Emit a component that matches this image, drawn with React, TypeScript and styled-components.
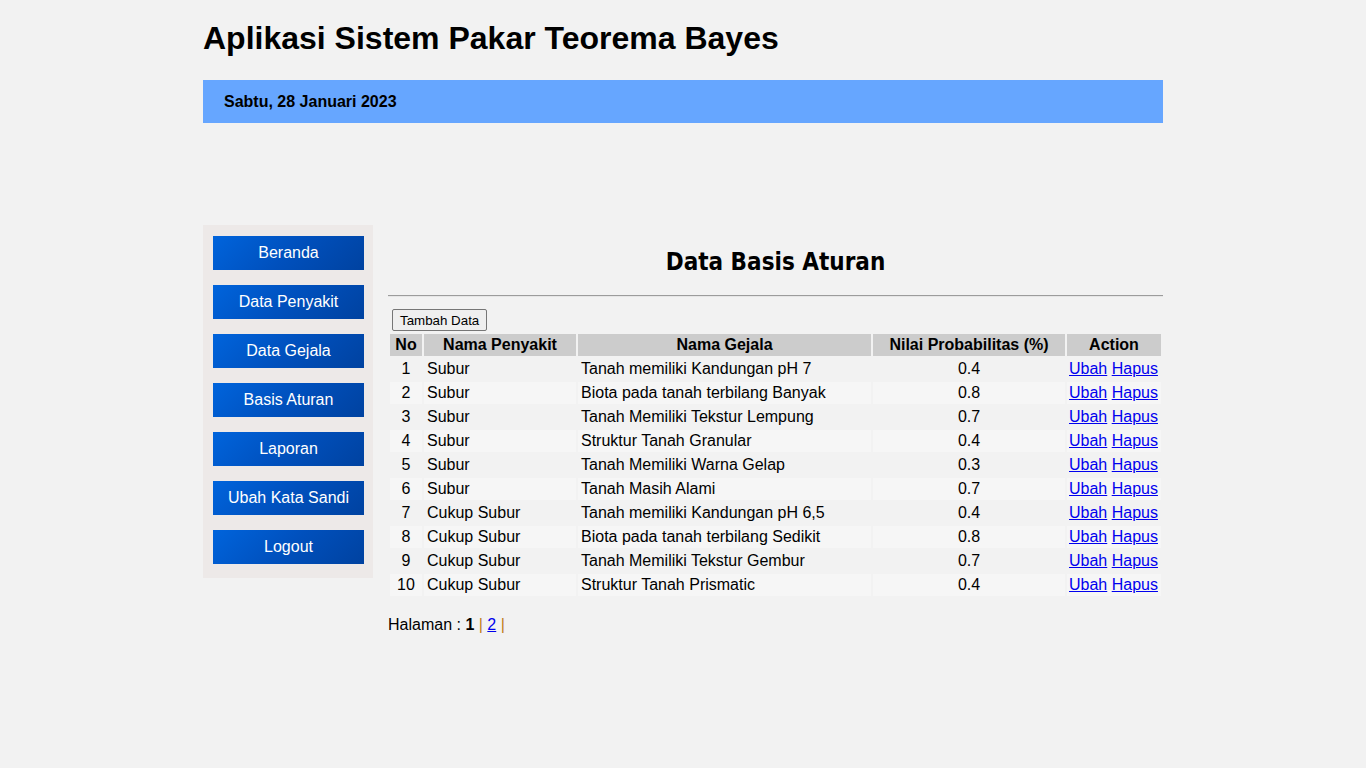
import React from "react";
import styled, { createGlobalStyle } from "styled-components";

const GlobalStyle = createGlobalStyle`
  html, body {
    margin: 0;
    padding: 0;
    background: #f2f2f2;
    font-family: "Liberation Sans", Arial, sans-serif;
    color: #000;
  }
`;

const Page = styled.div`
  width: 960px;
  margin: 0 auto;
`;

const Title = styled.h1`
  margin: 0;
  padding-top: 19px;
  height: 80px;
  box-sizing: border-box;
  font-size: 32px;
  font-weight: bold;
  line-height: 39px;
`;

const DateBar = styled.div`
  height: 43px;
  background: #66a6ff;
  display: flex;
  align-items: center;
  padding-left: 21px;
  font-size: 16px;
  font-weight: bold;
`;

const Body = styled.div`
  display: flex;
  align-items: flex-start;
  gap: 15px;
  margin-top: 102px;
`;

const Sidebar = styled.nav`
  width: 170px;
  box-sizing: border-box;
  background: #ede9e8;
  padding: 11px 9px 14px 10px;
  display: flex;
  flex-direction: column;
  gap: 15px;
`;

const NavButton = styled.a`
  display: flex;
  align-items: center;
  justify-content: center;
  height: 34px;
  background: linear-gradient(135deg, #0064dc 0%, #0050bd 50%, #0042a0 100%);
  color: #fff;
  font-size: 16px;
  text-decoration: none;
  cursor: pointer;
`;

const Content = styled.main`
  flex: 1;
  min-width: 0;
`;

const Heading = styled.h2`
  margin: 0;
  padding-top: 23px;
  height: 70px;
  box-sizing: border-box;
  text-align: center;
  font-family: "DejaVu Sans Condensed", "DejaVu Sans", sans-serif;
  font-size: 24px;
  font-weight: bold;
  line-height: 28px;
`;

const Rule = styled.hr`
  margin: 0 0 12px 0;
  border: none;
  border-top: 1px solid #9c9c9c;
  border-bottom: 1px solid #e6e6e6;
  height: 0;
`;

const AddButton = styled.button`
  margin-left: 4px;
  height: 22px;
  padding: 0 7px;
  font-family: "Liberation Sans", Arial, sans-serif;
  font-size: 13.33px;
  background: #efefef;
  border: 1px solid #767676;
  border-radius: 2px;
  color: #000;
  display: block;
`;

const Table = styled.table`
  width: 100%;
  table-layout: fixed;
  border-collapse: separate;
  border-spacing: 2px;
  font-size: 16px;
  margin-top: 1px;
`;

const Th = styled.th`
  background: #cccccc;
  font-weight: bold;
  height: 22px;
  padding: 0 2px;
  text-align: center;
  white-space: nowrap;
`;

const Row = styled.tr<{ $even: boolean }>`
  background: ${(p) => (p.$even ? "#f6f6f6" : "#f2f2f2")};
`;

const Td = styled.td<{ $center?: boolean }>`
  height: 22px;
  padding: 0 2px 0 ${(p) => (p.$center ? "2px" : "3px")};
  text-align: ${(p) => (p.$center ? "center" : "left")};
  white-space: nowrap;
  line-height: 18px;
`;

const ActionCell = styled.td`
  height: 22px;
  padding: 0 1px 0 2px;
  white-space: nowrap;
  line-height: 18px;
  text-align: left;
`;

const Link = styled.a`
  color: #0000ee;
  text-decoration: underline;
  cursor: pointer;
`;

const Pager = styled.div`
  margin-top: 18px;
  font-size: 16px;
`;

const Pipe = styled.span`
  color: #c0801a;
`;

const navItems = [
  "Beranda",
  "Data Penyakit",
  "Data Gejala",
  "Basis Aturan",
  "Laporan",
  "Ubah Kata Sandi",
  "Logout",
];

const rows: [string, string, string][] = [
  ["Subur", "Tanah memiliki Kandungan pH 7", "0.4"],
  ["Subur", "Biota pada tanah terbilang Banyak", "0.8"],
  ["Subur", "Tanah Memiliki Tekstur Lempung", "0.7"],
  ["Subur", "Struktur Tanah Granular", "0.4"],
  ["Subur", "Tanah Memiliki Warna Gelap", "0.3"],
  ["Subur", "Tanah Masih Alami", "0.7"],
  ["Cukup Subur", "Tanah memiliki Kandungan pH 6,5", "0.4"],
  ["Cukup Subur", "Biota pada tanah terbilang Sedikit", "0.8"],
  ["Cukup Subur", "Tanah Memiliki Tekstur Gembur", "0.7"],
  ["Cukup Subur", "Struktur Tanah Prismatic", "0.4"],
];

export default function App() {
  return (
    <>
      <GlobalStyle />
      <Page>
        <Title>Aplikasi Sistem Pakar Teorema Bayes</Title>
        <DateBar>Sabtu, 28 Januari 2023</DateBar>
        <Body>
          <Sidebar>
            {navItems.map((n) => (
              <NavButton key={n}>{n}</NavButton>
            ))}
          </Sidebar>
          <Content>
            <Heading>Data Basis Aturan</Heading>
            <Rule />
            <AddButton>Tambah Data</AddButton>
            <Table>
              <colgroup>
                <col style={{ width: 32 }} />
                <col style={{ width: 152 }} />
                <col style={{ width: 293 }} />
                <col style={{ width: 192 }} />
                <col style={{ width: 94 }} />
              </colgroup>
              <thead>
                <tr>
                  <Th>No</Th>
                  <Th>Nama Penyakit</Th>
                  <Th>Nama Gejala</Th>
                  <Th>Nilai Probabilitas (%)</Th>
                  <Th>Action</Th>
                </tr>
              </thead>
              <tbody>
                {rows.map((r, i) => (
                  <Row key={i} $even={i % 2 === 1}>
                    <Td $center>{i + 1}</Td>
                    <Td>{r[0]}</Td>
                    <Td>{r[1]}</Td>
                    <Td $center>{r[2]}</Td>
                    <ActionCell>
                      <Link>Ubah</Link> <Link>Hapus</Link>
                    </ActionCell>
                  </Row>
                ))}
              </tbody>
            </Table>
            <Pager>
              Halaman : <b>1</b> <Pipe>|</Pipe> <Link>2</Link> <Pipe>|</Pipe>
            </Pager>
          </Content>
        </Body>
      </Page>
    </>
  );
}
